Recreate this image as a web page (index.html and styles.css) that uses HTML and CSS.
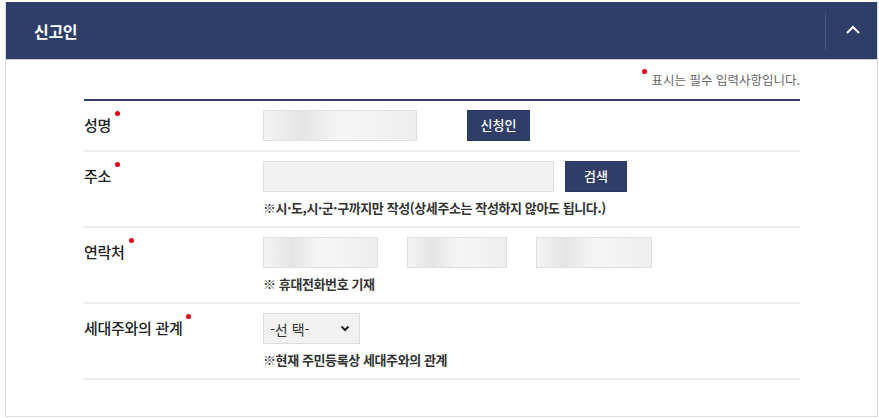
FILE: index.html
```html
<!DOCTYPE html>
<html lang="ko">
<head>
<meta charset="utf-8">
<link rel="stylesheet" href="styles.css">
</head>
<body>
<section class="panel">
  <header class="panel-head">
    <h2 class="panel-title">신고인</h2>
    <button class="toggle" type="button" aria-label="접기">
      <svg width="16" height="10" viewBox="0 0 16 10"><polyline points="2,8 8,2 14,8" fill="none" stroke="#fff" stroke-width="2"/></svg>
    </button>
  </header>
  <div class="panel-body">
    <p class="req-note"><span class="dot"></span>표시는 필수 입력사항입니다.</p>
    <div class="form">
      <div class="row">
        <div class="label">성명<span class="dot"></span></div>
        <div class="field">
          <div class="line">
            <input class="inp inp-name blur" type="text">
            <button class="btn" type="button">신청인</button>
          </div>
        </div>
      </div>
      <div class="row">
        <div class="label">주소<span class="dot"></span></div>
        <div class="field">
          <div class="line">
            <input class="inp inp-addr" type="text">
            <button class="btn btn-search" type="button">검색</button>
          </div>
          <p class="hint">※시·도,시·군·구까지만 작성(상세주소는 작성하지 않아도 됩니다.)</p>
        </div>
      </div>
      <div class="row">
        <div class="label">연락처<span class="dot"></span></div>
        <div class="field">
          <div class="line phone">
            <input class="inp inp-p1 blur" type="text">
            <input class="inp inp-p2 blur" type="text">
            <input class="inp inp-p3 blur" type="text">
          </div>
          <p class="hint">※ 휴대전화번호 기재</p>
        </div>
      </div>
      <div class="row">
        <div class="label">세대주와의 관계<span class="dot"></span></div>
        <div class="field">
          <div class="line">
            <div class="select">-선 택-
              <svg width="10" height="7" viewBox="0 0 10 7"><polyline points="1.5,1.5 5,5 8.5,1.5" fill="none" stroke="#222" stroke-width="2"/></svg>
            </div>
          </div>
          <p class="hint">※현재 주민등록상 세대주와의 관계</p>
        </div>
      </div>
    </div>
  </div>
</section>
</body>
</html>
```
FILE: styles.css
```css
* { box-sizing: border-box; }
body {
  margin: 0;
  background: #fff;
  font-family: "Noto Sans CJK KR", "Malgun Gothic", sans-serif;
  color: #333;
}
.panel {
  margin: 2px 1px 0 5px;
  height: 415px;
  border: 1px solid #dcdcdc;
  border-top: none;
}
.panel-head {
  height: 58px;
  background: #2f3e69;
  display: flex;
  align-items: center;
  justify-content: space-between;
  border-bottom: 1px solid #c9ccd4;
}
.panel-title {
  margin: 0 0 0 28px;
  font-size: 16px;
  font-weight: 700;
  color: #fff;
  letter-spacing: -0.3px;
}
.toggle {
  width: 52px;
  height: 38px;
  border: none;
  border-left: 1px solid #45547c;
  background: transparent;
  display: flex;
  align-items: center;
  justify-content: center;
  padding: 0 0 2px 2px;
}
.panel-body {
  padding: 0 77px 0 78px;
}
.req-note {
  margin: 0;
  height: 39px;
  padding-top: 10px;
  text-align: right;
  font-size: 12.5px;
  color: #666;
  letter-spacing: 0;
}
.dot {
  display: inline-block;
  width: 5px;
  height: 5px;
  border-radius: 50%;
  background: #e60012;
  vertical-align: top;
}
.req-note .dot { margin: 0 5px 0 0; position: relative; top: -1px; }
.form {
  border-top: 2px solid #2f3e69;
}
.row {
  display: grid;
  grid-template-columns: 179px 1fr;
  border-bottom: 2px solid #eeeeee;
  padding: 9px 0 9px;
}
.label {
  font-size: 15px;
  font-weight: 500;
  color: #222;
  padding-top: 4px;
  letter-spacing: -0.3px;
}
.label .dot { margin: 0 0 0 4px; position: relative; top: -3px; }
.line {
  display: flex;
  align-items: center;
  gap: 11px;
}
.inp {
  height: 31px;
  border: 1px solid #e0e0e0;
  background: #f2f2f2;
  margin: 0;
  padding: 0;
}
.inp-name { width: 154px; margin-right: 39px; }
.inp-addr { width: 291px; }
.phone { gap: 29px; }
.inp-p1 { width: 115px; }
.inp-p2 { width: 100px; }
.inp-p3 { width: 116px; }
.blur {
  background: linear-gradient(90deg, #f4f4f4 0%, #e4e4e4 25%, #f6f6f6 50%, #eeeeee 100%);
}
.btn {
  height: 31px;
  width: 63px;
  border: 1px solid #2a3860;
  background: #2f3e69;
  color: #fff;
  font-family: inherit;
  font-size: 13px;
  font-weight: 500;
  padding: 0 0 2px;
}
.btn-search { width: 62px; }
.hint {
  margin: 7px 0 0;
  font-size: 13px;
  line-height: 18px;
  font-weight: 700;
  color: #333;
  letter-spacing: -0.4px;
}
.select {
  width: 97px;
  height: 31px;
  border: 1px solid #dcdcdc;
  background: #f2f2f2;
  display: flex;
  align-items: center;
  justify-content: space-between;
  padding: 0 9px 0 6px;
  font-size: 14px;
  color: #333;
}
```
